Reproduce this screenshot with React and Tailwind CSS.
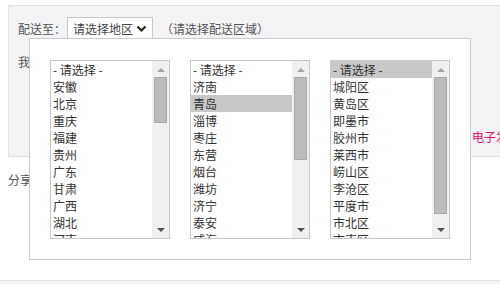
import React from "react";

const lists = [
  { items: ["- 请选择 -", "安徽", "北京", "重庆", "福建", "贵州", "广东", "甘肃", "广西", "湖北", "河南"], sel: -1, thumbH: 46 },
  { items: ["- 请选择 -", "济南", "青岛", "淄博", "枣庄", "东营", "烟台", "潍坊", "济宁", "泰安", "威海"], sel: 2, thumbH: 83 },
  { items: ["- 请选择 -", "城阳区", "黄岛区", "即墨市", "胶州市", "莱西市", "崂山区", "李沧区", "平度市", "市北区", "市南区"], sel: 0, thumbH: 137 },
];

function ListBox({ items, sel, thumbH }) {
  return (
    <div className="flex w-[120px] h-[179px] border border-[#c8c8c8] bg-white overflow-hidden">
      <div className="flex-1 flex flex-col overflow-hidden">
        {items.map((t, i) => (
          <div
            key={i}
            className={
              "h-[17px] shrink-0 leading-[17px] pl-[2px] text-[12px] text-[#333] whitespace-nowrap " +
              (i === sel ? "bg-[#c8c8c8]" : "")
            }
          >
            {t}
          </div>
        ))}
      </div>
      <div className="w-[17px] bg-[#f0f0f0] flex flex-col">
        <div className="h-[16px] flex items-center justify-center">
          <svg width="8" height="5" viewBox="0 0 8 5">
            <polygon points="0,5 8,5 4,1" fill="#a3a3a3" />
          </svg>
        </div>
        <div className="flex-1 flex flex-col">
          <div className="mx-[2px] bg-[#bcbcbc] border border-[#a9a9a9]" style={{ height: thumbH }} />
        </div>
        <div className="h-[16px] flex items-center justify-center">
          <svg width="8" height="5" viewBox="0 0 8 5">
            <polygon points="0,0 8,0 4,4" fill="#505050" />
          </svg>
        </div>
      </div>
    </div>
  );
}

export default function App() {
  return (
    <div
      className="relative w-[500px] h-[285px] bg-white overflow-hidden text-[12px] text-[#555]"
      style={{ fontFamily: '"Noto Sans CJK SC", "Noto Sans", sans-serif' }}
    >
      <div className="h-[5px]" />
      <div className="ml-[8px] h-[152px] bg-[#f3f3f5] border border-[#e2e2e2] border-r-0 flex flex-col">
        <div className="flex items-center pl-[9px] pt-[11px]">
          <span>配送至：</span>
          <div className="ml-[1px] w-[86px] h-[24px] border border-[#c8c8c8] bg-white flex items-center pl-[5px] pr-[5px] justify-between text-[#444]">
            <span>请选择地区</span>
            <svg width="11" height="8" viewBox="0 0 11 8">
              <polyline points="1.5,1.5 5.5,5.5 9.5,1.5" fill="none" stroke="#222" strokeWidth="2.2" />
            </svg>
          </div>
          <span className="ml-[8px]">（请选择配送区域）</span>
        </div>
        <div className="pl-[9px] mt-[12px] leading-[17px]">我</div>
        <div className="pl-[463px] mt-[58px] whitespace-nowrap text-[#e4106b]">电子发票</div>
      </div>
      <div className="pl-[8px] mt-[14px]">分享</div>
      <div className="mt-[91px] border-t border-[#e2e2e2] bg-[#f5f5f5] h-[10px]" />

      <div className="absolute left-[29px] top-[38px] w-[442px] h-[222px] bg-white border border-[#cccccc] flex gap-[20px] pl-[20px] pt-[21px]">
        {lists.map((l, i) => (
          <ListBox key={i} {...l} />
        ))}
      </div>
    </div>
  );
}
